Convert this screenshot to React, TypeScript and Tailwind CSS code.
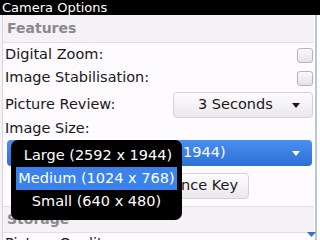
import React from "react";

const Checkbox: React.FC = () => (
  <div className="w-[16px] h-[15px] shrink-0 rounded-[3px] border border-[#b9b4bc] bg-gradient-to-b from-[#fbf9fc] to-[#e6e2e8]" />
);

const Arrow: React.FC<{ color: string }> = ({ color }) => (
  <svg width="8" height="5" viewBox="0 0 8 5" className="shrink-0">
    <path d="M0 0 H8 L4 5 Z" fill={color} />
  </svg>
);

const App: React.FC = () => {
  return (
    <div
      className="relative w-[320px] h-[240px] overflow-hidden bg-white text-[#1c1620]"
      style={{ fontFamily: '"DejaVu Sans", sans-serif' }}
    >
      <div className="h-[15px] bg-black text-white text-[13px] leading-[15px] pl-[2px] whitespace-nowrap">
        Camera Options
      </div>

      <div className="flex h-[225px] overflow-hidden">
        <div className="w-[3px] shrink-0 bg-[#f6f3f6] border-r border-[#d8d4da]" />
        <div className="flex-1 flex flex-col bg-[#fdfbfd] text-[14.5px] whitespace-nowrap">
          <div className="h-[28px] shrink-0 flex items-center pl-[4px] bg-[#f5f2f5] border-b border-[#e3dfe4] text-[14px] font-bold text-[#8c8890]">
            Features
          </div>
          <div className="h-[24px] shrink-0 flex items-center justify-between pl-[2px] pr-[1px]">
            <span>Digital Zoom:</span>
            <Checkbox />
          </div>
          <div className="h-[22px] shrink-0 flex items-center justify-between pl-[2px] pr-[1px]">
            <span>Image Stabilisation:</span>
            <Checkbox />
          </div>
          <div className="h-[32px] shrink-0 flex items-center justify-between pl-[2px] pr-[1px]">
            <span>Picture Review:</span>
            <div className="w-[140px] h-[26px] rounded-[4px] border border-[#d6d2d8] bg-gradient-to-b from-[#fdfcfd] to-[#ebe8ec] flex items-center justify-between pl-[24px] pr-[12px]">
              <span>3 Seconds</span>
              <Arrow color="#1c1620" />
            </div>
          </div>
          <div className="h-[16px] shrink-0 flex items-center pl-[2px]">Image Size:</div>
          <div className="h-[29px] shrink-0 pt-[3px] pl-[4px] pr-[2px]">
            <div className="h-[26px] rounded-[4px] bg-gradient-to-b from-[#4a8ff0] to-[#2d6fd8] text-white flex items-center justify-between pl-[176px] pr-[12px]">
              <span>1944)</span>
              <Arrow color="#ffffff" />
            </div>
          </div>
          <div className="h-[41px] shrink-0 flex items-center pl-[60px] border-b border-[#e3dfe4]">
            <div className="h-[26px] w-[186px] rounded-[4px] border border-[#d6d2d8] bg-gradient-to-b from-[#fdfcfd] to-[#ebe8ec] flex items-center justify-end pr-[10px]">
              Set Convenience Key
            </div>
          </div>
          <div className="h-[26px] shrink-0 flex items-center pl-[4px] bg-[#f5f2f5] border-b border-[#e3dfe4] text-[14px] font-bold text-[#8c8890]">
            Storage
          </div>
          <div className="h-[22px] shrink-0 flex items-center pl-[2px]">Picture Quality:</div>
        </div>
        <div className="w-[6px] shrink-0 flex">
          <div className="w-[2px] h-full ml-[1px] bg-[#b9c6d8]" />
        </div>
      </div>

      <div className="absolute left-[307px] top-[232px]">
        <svg width="9" height="5" viewBox="0 0 9 5">
          <path d="M0 0 H9 L4.5 5 Z" fill="#3a6fd0" />
        </svg>
      </div>

      <div className="absolute left-[11px] top-[140px] w-[171px] h-[80px] bg-black rounded-[7px] text-white text-[14.5px] px-[5px] pt-[5px] flex flex-col whitespace-nowrap">
        <div className="h-[22px] shrink-0 flex items-center justify-center pl-[3px]">Large (2592 x 1944)</div>
        <div className="h-[23px] shrink-0 flex items-center justify-center bg-[#3b82ec]">Medium (1024 x 768)</div>
        <div className="h-[24px] shrink-0 flex items-center justify-center">Small (640 x 480)</div>
      </div>
    </div>
  );
};

export default App;
